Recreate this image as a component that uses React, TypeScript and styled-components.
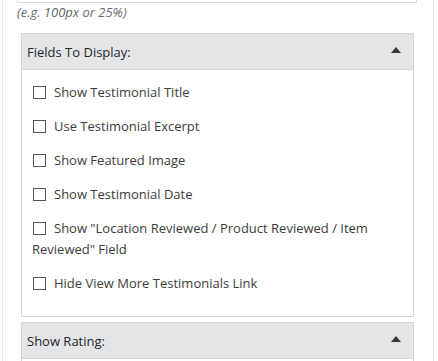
import * as React from "react";
import styled, { createGlobalStyle } from "styled-components";

const GlobalStyle = createGlobalStyle`
    body {
        margin: 0;
        background: #fff;
        font-family: "Open Sans", "Liberation Sans", sans-serif;
        overflow: hidden;
    }
`;

const Frame = styled.div`
    margin-left: 2px;
    width: 400px;
    height: 361px;
    overflow: hidden;
    padding: 0 16px 0 14px;
    border-left: 1px solid #e5e5e5;
    border-right: 1px solid #e5e5e5;
`;

const WidthInput = styled.div`
    height: 30px;
    margin-top: -29px;
    border: 1px solid #dddddd;
    background: #fff;
`;

const Hint = styled.p`
    margin: 0;
    font-size: 13px;
    line-height: 18px;
    font-style: italic;
    color: #666;
`;

const Panel = styled.section<{first?:boolean}>`
    margin: ${props=>props.first ? "12px" : "5px"} 3px 0 4px;
    border: 1px solid #d4d4d4;
    background: #fff;
`;

const PanelHeader = styled.div`
    display: flex;
    align-items: center;
    justify-content: space-between;
    height: 35px;
    padding: 0 12px 0 5px;
    background: #e4e5e7;
    border-bottom: 1px solid #d4d4d4;
    font-size: 13px;
    color: #23282d;
`;

const Caret = styled.svg`
    width: 10px;
    height: 6px;
    fill: #32373c;
    margin-top: -4px;
`;

const PanelBody = styled.div`
    padding: 12px 10px 9px;
`;

const Option = styled.label`
    display: block;
    margin-bottom: 13px;
    font-size: 13px;
    line-height: 21px;
    color: #3c3c3c;
`;

const Box = styled.span`
    display: inline-block;
    width: 11px;
    height: 11px;
    margin: 0 8px 0 1px;
    border: 1px solid #555;
    vertical-align: -2px;
    background: #fff;
`;

const fields = [
    "Show Testimonial Title",
    "Use Testimonial Excerpt",
    "Show Featured Image",
    "Show Testimonial Date",
    "Show \"Location Reviewed / Product Reviewed / Item Reviewed\" Field",
    "Hide View More Testimonials Link",
];

const Header = ({title}:{title:string}) => (
    <PanelHeader>
        <span>{title}</span>
        <Caret viewBox="0 0 10 6">
            <polygon points="5,0 10,6 0,6" />
        </Caret>
    </PanelHeader>
);

const App = () => {
    return (
        <>
            <GlobalStyle />
            <Frame>
                <WidthInput />
                <Hint>(e.g. 100px or 25%)</Hint>
                <Panel first>
                    <Header title="Fields To Display:" />
                    <PanelBody>
                        {fields.map(f=>(
                            <Option key={f}>
                                <Box />
                                {f}
                            </Option>
                        ))}
                    </PanelBody>
                </Panel>
                <Panel>
                    <Header title="Show Rating:" />
                    <PanelBody />
                </Panel>
            </Frame>
        </>
    );
};

export default App;
